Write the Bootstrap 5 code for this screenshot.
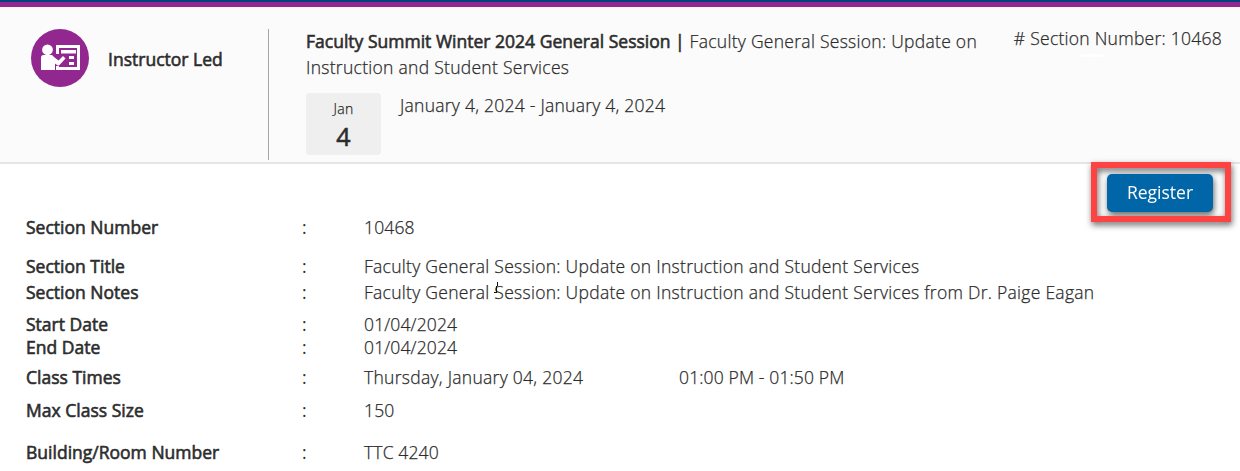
<!DOCTYPE html>
<html lang="en">
<head>
<meta charset="utf-8">
<meta name="viewport" content="width=device-width, initial-scale=1">
<title>Faculty Summit Winter 2024 General Session</title>
<link rel="stylesheet" href="https://cdn.jsdelivr.net/npm/bootstrap@5.3.0/dist/css/bootstrap.min.css">
<style>
body{font-family:"Open Sans",sans-serif;font-size:17.5px;font-weight:300;line-height:26px;color:#2b2b2b;background:#fff;height:471px;overflow:hidden;letter-spacing:.28px;-webkit-text-stroke:.25px #2b2b2b}
.topbar{height:7px;background:#92278f;border-top:2px solid #00427a}
.summary{height:157px;background:#fbfbfb;border-bottom:2px solid #e5e5e5;padding-top:22px}
.kind{width:269px;height:131px;border-right:1px solid #a6a6a6;padding-left:31px}
.kind svg{display:block}
.strong-label{font-weight:400;letter-spacing:.01px;-webkit-text-stroke:.6px #2f2f2f}
.kind-name{margin:17px 0 0 19px}
.title-block{width:700px;margin:-1px 0 0 37px}
.date-row{margin-top:13px}
.date-text{margin:-1px 0 0 19px;letter-spacing:.25px}
.datebox{width:75px;height:62px;background:#efefef;border-radius:4px;text-align:center}
.month{font-size:14px;line-height:20px;padding-top:6px}
.day{font-size:25px;line-height:34px}
.secno{margin:-4px 18px 0 auto;height:33px;position:relative;letter-spacing:.26px}
.secno::after{content:"";position:absolute;left:67px;top:29px;width:22px;height:3px;background:#fff}
.register-mark{width:140px;height:60px;border:6px solid #ff4343;padding:6px 10px;margin:-2px 9px -8px 0;filter:drop-shadow(1px 3px 3px rgba(0,0,0,.6))}
.btn-register{--bs-btn-bg:#0066a8;--bs-btn-color:#fff;--bs-btn-hover-bg:#005a94;--bs-btn-hover-color:#fff;font-size:17.5px;font-weight:400;width:106px;height:38px;border:0;border-radius:5px;padding:0 0 2px;line-height:36px;letter-spacing:0;-webkit-text-stroke:0}
.details{padding-left:26px}
.details dt{width:276px;font-weight:400}
.details dd{margin:0}
.digits{letter-spacing:.14px}
.colon{width:62px;font-weight:400;-webkit-text-stroke:0}
.r1{margin-bottom:13px}.r3{margin-bottom:6px}.r4{margin-bottom:-3px}.r5{margin-bottom:4px}.r6{margin-bottom:7px}.r7{margin-bottom:16px}
.day-text{width:315px}
.caret-mark{position:absolute;left:494px;top:282px}
</style>
<script src="https://cdn.jsdelivr.net/npm/bootstrap@5.3.0/dist/js/bootstrap.bundle.min.js"></script>
</head>
<body>
<div class="topbar"></div>
<header class="summary d-flex">
  <div class="kind d-flex align-items-start flex-shrink-0">
    <svg width="58" height="58" viewBox="31 29 58 58"><circle cx="60" cy="58" r="29" fill="#92278f"/>
      <path fill="#fff" fill-rule="evenodd" d="M56 45H80V70H56ZM59 48V67H77V48Z"/>
      <path fill="#fff" d="M61 50h15v3.500H61ZM69 56h5v3h-5ZM69 62h5v3h-5Z"/>
      <path fill="#92278f" d="M54 54H61V66H54Z"/>
      <circle cx="47.500" cy="49.800" r="5.400" fill="#fff"/>
      <path fill="#fff" d="M41 70V57.500q0-2.500 2.500-2.500H52l2 2 4.500 3.500 4.500-4.500 2.500 2.500-6 6.500q-1 1-2.500 0l-2-1.500V70Z"/></svg>
    <div class="kind-name strong-label">Instructor Led</div>
  </div>
  <div class="title-block">
    <div><span class="strong-label">Faculty Summit Winter 2024 General Session |</span> Faculty General Session: Update on Instruction and Student Services</div>
    <div class="d-flex date-row">
      <div class="datebox"><div class="month">Jan</div><div class="day strong-label">4</div></div>
      <div class="date-text">January 4, 2024 - January 4, 2024</div>
    </div>
  </div>
  <div class="text-nowrap secno"># Section Number: 10468</div>
</header>
<main>
  <div class="d-flex justify-content-end"><div class="register-mark"><button type="button" class="btn btn-register">Register</button></div></div>
  <dl class="details m-0">
    <div class="d-flex r1"><dt class="strong-label">Section Number</dt><span class="colon">:</span><dd class="digits">10468</dd></div>
    <div class="d-flex r2"><dt class="strong-label">Section Title</dt><span class="colon">:</span><dd>Faculty General Session: Update on Instruction and Student Services</dd></div>
    <div class="d-flex r3"><dt class="strong-label">Section Notes</dt><span class="colon">:</span><dd>Faculty General Session: Update on Instruction and Student Services from Dr. Paige Eagan</dd></div>
    <div class="d-flex r4"><dt class="strong-label">Start Date</dt><span class="colon">:</span><dd class="digits">01/04/2024</dd></div>
    <div class="d-flex r5"><dt class="strong-label">End Date</dt><span class="colon">:</span><dd class="digits">01/04/2024</dd></div>
    <div class="d-flex r6"><dt class="strong-label">Class Times</dt><span class="colon">:</span><dd class="d-flex"><span class="day-text">Thursday, January 04, 2024</span><span class="digits">01:00 PM - 01:50 PM</span></dd></div>
    <div class="d-flex r7"><dt class="strong-label">Max Class Size</dt><span class="colon">:</span><dd class="digits">150</dd></div>
    <div class="d-flex"><dt class="strong-label">Building/Room Number</dt><span class="colon">:</span><dd class="digits">TTC 4240</dd></div>
  </dl>
</main>
<svg class="caret-mark" width="6" height="11" viewBox="0 0 6 11" aria-hidden="true"><path d="M3.500 0V4M2.500 4V10M0 10.500H3" fill="none" stroke="#111"/></svg>
</body>
</html>
